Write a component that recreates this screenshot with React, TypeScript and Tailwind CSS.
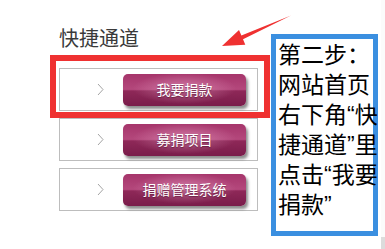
import { ReactNode } from 'react';

const LINKS = ['我要捐款', '募捐项目', '捐赠管理系统'];

const STEP_LINES = ['第二步：', '网站首页', '右下角“快', '捷通道”里', '点击“我要', '捐款”'];

function Chevron() {
  return (
    <svg width="7" height="13" viewBox="0 0 7 13" className="shrink-0">
      <polyline points="1,1 6,6.5 1,12" fill="none" stroke="#9a9a9a" strokeWidth="0.9" />
    </svg>
  );
}

function LinkButton({ children }: { children: ReactNode }) {
  return (
    <div
      className="ml-[19px] flex h-[32px] w-[123px] items-center justify-center rounded-[5px] text-[14px] text-white shadow-[2px_3px_3px_rgba(0,0,0,0.45)] [background-image:radial-gradient(ellipse_60%_70%_at_50%_45%,rgba(255,200,230,0.4),rgba(255,255,255,0)_70%),linear-gradient(180deg,#a6356b_0%,#b4487c_48%,#8e2858_53%,#7a1c4a_100%)] [text-shadow:0_1px_1px_rgba(60,0,30,0.5)]"
    >
      {children}
    </div>
  );
}

export default function App() {
  return (
    <div className="relative flex h-[249px] w-[385px] overflow-hidden bg-white font-['Noto_Sans_CJK_SC','Noto_Sans',sans-serif]">
      {/* 快捷通道 */}
      <div className="w-[271px] shrink-0 pl-[59px] pt-[28px]">
        <div className="h-[20px] text-[20px] leading-[20px] text-[#3a3a3a]">快捷通道</div>
        <div className="mt-[20px] flex flex-col gap-[7px]">
          {LINKS.map((label) => (
            <div
              key={label}
              className="flex h-[43px] w-[199px] items-center border border-[#bdbdbd] pl-[37px]"
            >
              <Chevron />
              <LinkButton>{label}</LinkButton>
            </div>
          ))}
        </div>
      </div>

      {/* step note */}
      <div className="mt-[34px] h-[202px] w-[107px] shrink-0 border-[5px] border-[#3b8fe0] pl-[2px] pt-[1px] font-['Liberation_Sans','Noto_Sans_CJK_SC',sans-serif] text-[23px] leading-[30px] text-black">
        {STEP_LINES.map((line) => (
          <div key={line} className="whitespace-nowrap">
            {line}
          </div>
        ))}
      </div>

      <div className="ml-[3px] flex flex-1 flex-col">
        <div className="h-[237px] bg-[#fbfbfb]" />
        <div className="flex-1 bg-[#dcdcdc]" />
      </div>

      {/* annotations */}
      <div className="pointer-events-none absolute left-[50px] top-[55px] h-[63px] w-[220px] border-[6px] border-[#ef3131]" />
      <svg className="pointer-events-none absolute left-0 top-0" width="385" height="249">
        <polygon
          points="222,46 239,30 241.4,35.6 291,15.5 243,39.2 245.3,44.8"
          fill="#ef3131"
        />
      </svg>
    </div>
  );
}
